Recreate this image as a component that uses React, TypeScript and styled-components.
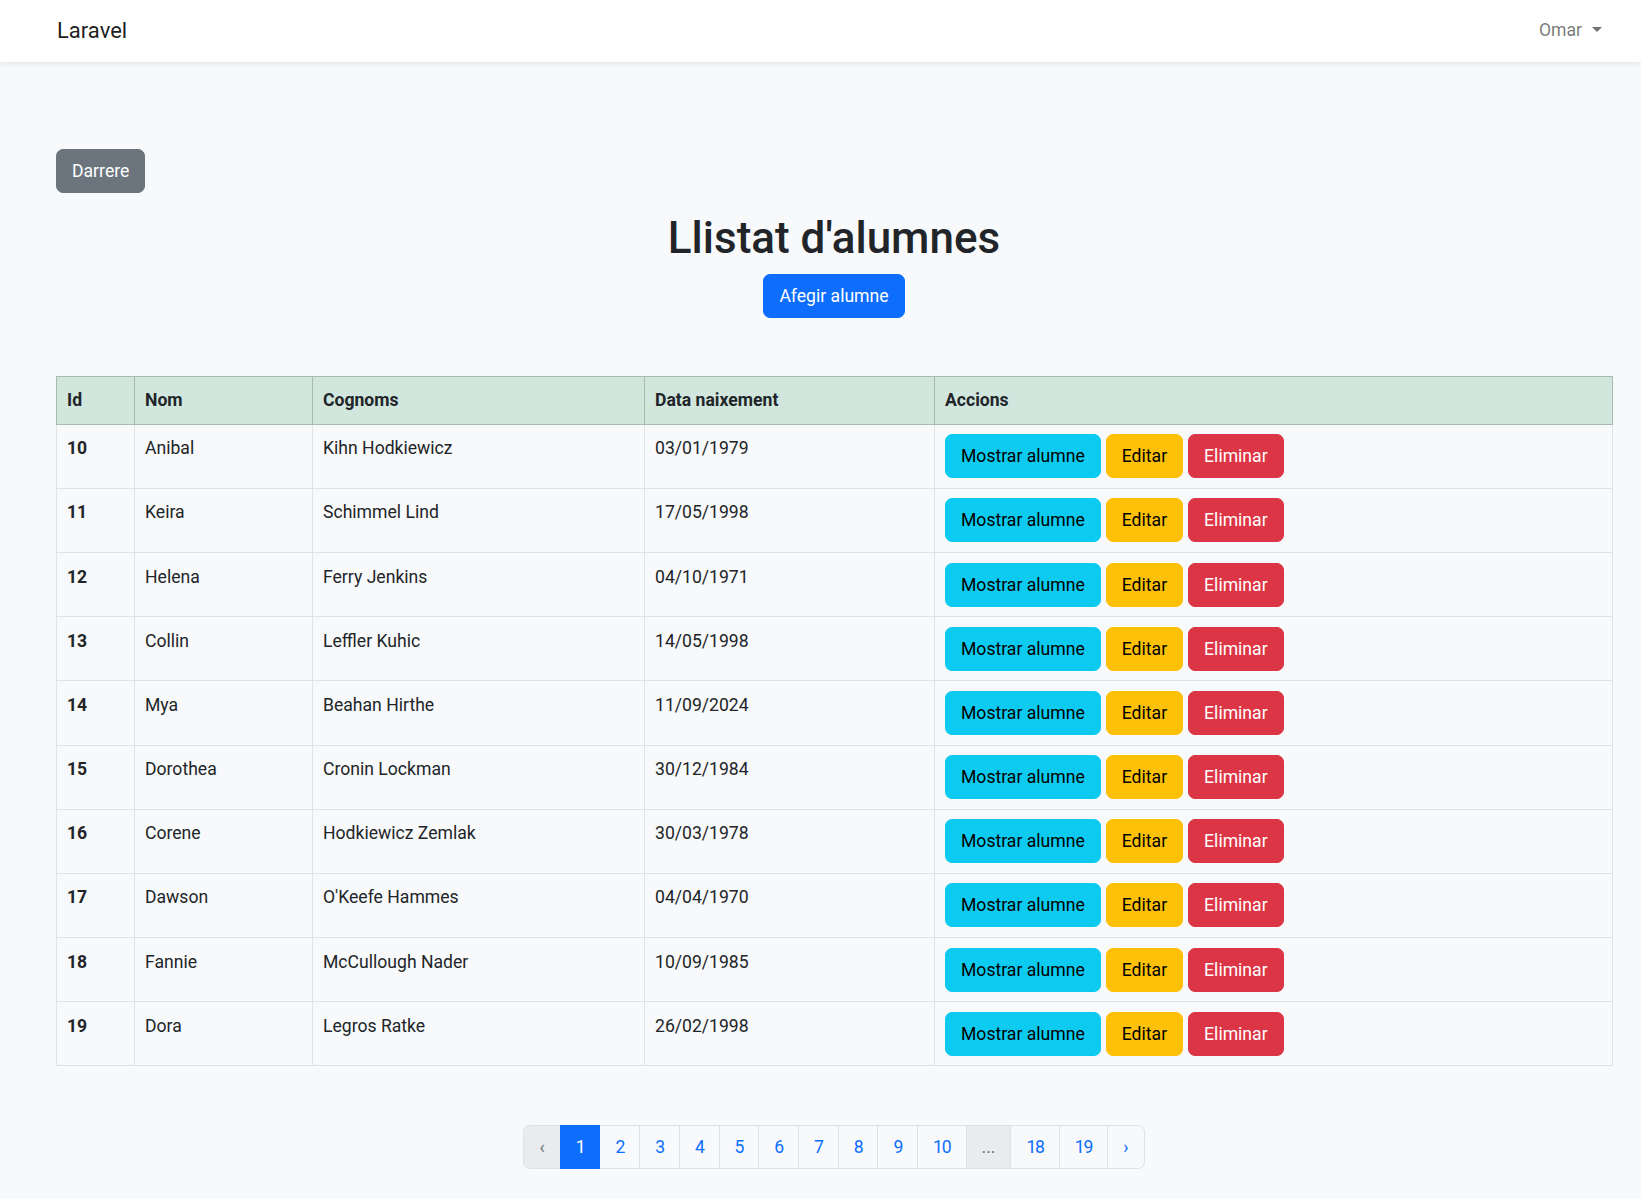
import React from "react";
import styled, { createGlobalStyle, css } from "styled-components";

const GlobalStyle = createGlobalStyle`
  * { box-sizing: border-box; }
  body {
    margin: 0;
    background: #f8f9fa;
    color: #212529;
    font-family: Roboto, "Noto Sans", "Liberation Sans", sans-serif;
    font-size: 17.6px;
    line-height: 28px;
  }
`;

const Navbar = styled.nav`
  height: 62px;
  background: #fff;
  box-shadow: 0 2px 5px rgba(0, 0, 0, 0.08);
  position: relative;
  z-index: 1;
`;

const Container = styled.div`
  width: 1556px;
  margin-left: 56px;
`;

const NavInner = styled(Container)`
  height: 100%;
  display: flex;
  align-items: center;
  justify-content: space-between;
`;

const Brand = styled.a`
  font-size: 22px;
  line-height: 30px;
  color: rgba(0, 0, 0, 0.9);
  text-decoration: none;
  margin-left: 1px;
  margin-top: -1px;
`;

const UserToggle = styled.a`
  display: flex;
  align-items: center;
  color: rgba(0, 0, 0, 0.55);
  padding: 9px 10px 9px 9px;
  margin-top: -3px;
  text-decoration: none;
  &::after {
    content: "";
    display: inline-block;
    margin-left: 10px;
    border-top: 5.6px solid rgba(0, 0, 0, 0.55);
    border-left: 5.3px solid transparent;
    border-right: 5.3px solid transparent;
  }
`;

const Main = styled(Container)`
  padding-top: 87px;
`;

type Variant = "secondary" | "primary" | "info" | "warning" | "danger";

const variants: Record<Variant, ReturnType<typeof css>> = {
  secondary: css`background: #6c757d; border-color: #6c757d; color: #fff;`,
  primary: css`background: #0d6efd; border-color: #0d6efd; color: #fff;`,
  info: css`background: #0dcaf0; border-color: #0dcaf0; color: #000;`,
  warning: css`background: #ffc107; border-color: #ffc107; color: #000;`,
  danger: css`background: #dc3545; border-color: #dc3545; color: #fff;`,
};

const Button = styled.button<{ $variant: Variant }>`
  display: inline-block;
  font-family: inherit;
  font-size: 17.6px;
  line-height: 28px;
  padding: 7px 15px;
  border: 1px solid transparent;
  border-radius: 7px;
  cursor: pointer;
  ${(p) => variants[p.$variant]}
`;

const Header = styled.div`
  text-align: center;
  margin-top: 19px;
`;

const Title = styled.h1`
  margin: 0 0 9px;
  font-size: 44px;
  line-height: 52.8px;
  font-weight: 500;
`;

const Table = styled.table`
  width: 1556px;
  margin-top: 58px;
  border-collapse: collapse;
  table-layout: fixed;
`;

const HeadCell = styled.th`
  background: #d1e7dd;
  border: 1px solid #a9bbb1;
  text-align: left;
  font-weight: 700;
  padding: 9.4px 10px;
  vertical-align: top;
`;

const Cell = styled.td<{ $bold?: boolean }>`
  border: 1px solid #dee2e6;
  padding: 9.6px 10px;
  vertical-align: top;
  font-weight: ${(p) => (p.$bold ? 700 : 400)};
`;

const Actions = styled.div`
  display: flex;
  gap: 5px;
`;

const PaginationWrap = styled.nav`
  display: flex;
  justify-content: center;
  margin-top: 59px;
`;

const PageList = styled.ul`
  display: flex;
  list-style: none;
  margin: 0;
  padding: 0;
`;

const PageItem = styled.li<{ $active?: boolean; $disabled?: boolean; $numeric?: boolean }>`
  display: block;
  padding: 7px 15px;
  margin-left: -1px;
  border: 1px solid #dee2e6;
  color: #0d6efd;
  line-height: 28px;
  position: relative;
  letter-spacing: ${(p) => (p.$numeric ? "-1.2px" : "0")};
  &:first-child {
    margin-left: 0;
    border-top-left-radius: 7px;
    border-bottom-left-radius: 7px;
  }
  &:last-child {
    border-top-right-radius: 7px;
    border-bottom-right-radius: 7px;
  }
  ${(p) =>
    p.$disabled &&
    css`
      background: #e9ecef;
      color: #6c757d;
    `}
  ${(p) =>
    p.$active &&
    css`
      background: #0d6efd;
      border-color: #0d6efd;
      color: #fff;
      z-index: 2;
    `}
`;

const students: [number, string, string, string][] = [
  [10, "Anibal", "Kihn Hodkiewicz", "03/01/1979"],
  [11, "Keira", "Schimmel Lind", "17/05/1998"],
  [12, "Helena", "Ferry Jenkins", "04/10/1971"],
  [13, "Collin", "Leffler Kuhic", "14/05/1998"],
  [14, "Mya", "Beahan Hirthe", "11/09/2024"],
  [15, "Dorothea", "Cronin Lockman", "30/12/1984"],
  [16, "Corene", "Hodkiewicz Zemlak", "30/03/1978"],
  [17, "Dawson", "O'Keefe Hammes", "04/04/1970"],
  [18, "Fannie", "McCullough Nader", "10/09/1985"],
  [19, "Dora", "Legros Ratke", "26/02/1998"],
];

const pages: { label: string; active?: boolean; disabled?: boolean }[] = [
  { label: "‹", disabled: true },
  { label: "1", active: true },
  ...["2", "3", "4", "5", "6", "7", "8", "9", "10"].map((l) => ({ label: l })),
  { label: "...", disabled: true },
  { label: "18" },
  { label: "19" },
  { label: "›" },
];

export default function App() {
  return (
    <>
      <GlobalStyle />
      <Navbar>
        <NavInner>
          <Brand href="#">Laravel</Brand>
          <UserToggle href="#">Omar</UserToggle>
        </NavInner>
      </Navbar>
      <Main>
        <Button $variant="secondary">Darrere</Button>
        <Header>
          <Title>Llistat d'alumnes</Title>
          <Button $variant="primary">Afegir alumne</Button>
        </Header>
        <Table>
          <colgroup>
            <col style={{ width: 78 }} />
            <col style={{ width: 178 }} />
            <col style={{ width: 332 }} />
            <col style={{ width: 290 }} />
            <col style={{ width: 678 }} />
          </colgroup>
          <thead>
            <tr>
              <HeadCell>Id</HeadCell>
              <HeadCell>Nom</HeadCell>
              <HeadCell>Cognoms</HeadCell>
              <HeadCell>Data naixement</HeadCell>
              <HeadCell>Accions</HeadCell>
            </tr>
          </thead>
          <tbody>
            {students.map(([id, nom, cognoms, data]) => (
              <tr key={id}>
                <Cell $bold>{id}</Cell>
                <Cell>{nom}</Cell>
                <Cell>{cognoms}</Cell>
                <Cell>{data}</Cell>
                <Cell>
                  <Actions>
                    <Button $variant="info">Mostrar alumne</Button>
                    <Button $variant="warning">Editar</Button>
                    <Button $variant="danger">Eliminar</Button>
                  </Actions>
                </Cell>
              </tr>
            ))}
          </tbody>
        </Table>
        <PaginationWrap>
          <PageList>
            {pages.map((p, i) => (
              <PageItem
                key={i}
                $active={p.active}
                $disabled={p.disabled}
                $numeric={/^\d+$/.test(p.label)}
              >
                {p.label}
              </PageItem>
            ))}
          </PageList>
        </PaginationWrap>
      </Main>
    </>
  );
}
